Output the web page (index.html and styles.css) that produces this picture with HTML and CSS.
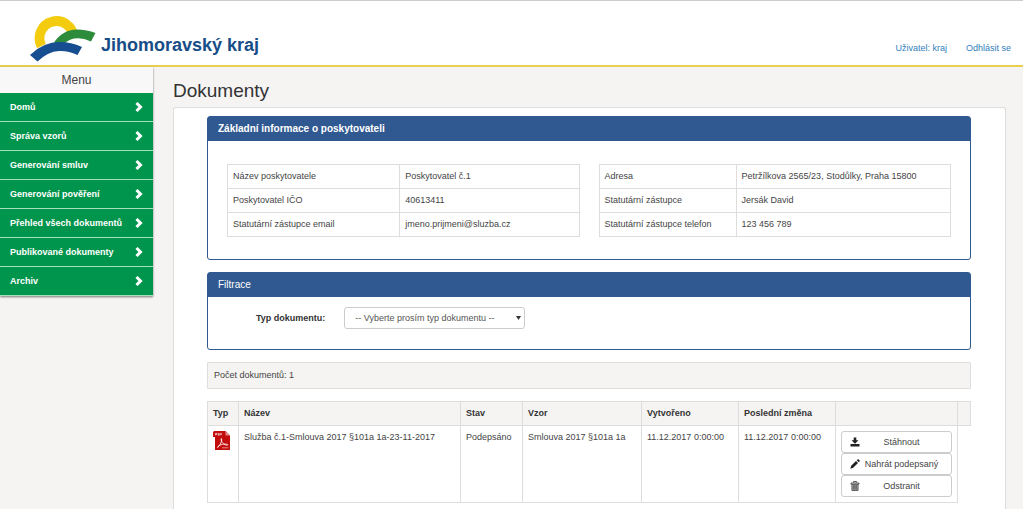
FILE: index.html
```html
<!DOCTYPE html>
<html lang="cs">
<head>
<meta charset="utf-8">
<title>Dokumenty</title>
<link rel="stylesheet" href="styles.css">
</head>
<body>
<svg class="sprite" aria-hidden="true">
  <symbol id="chevron" viewBox="0 0 8 10"><path d="M1.500 1 5.500 5 1.500 9" fill="none" stroke="#fff" stroke-width="3"/></symbol>
</svg>
<header class="header">
  <a class="brand" href="#">
    <svg class="brand-mark" viewBox="30 14 66 48" aria-hidden="true">
      <path d="M41.500 46A17 17 0 1 1 73.500 37" fill="none" stroke="#f3cb0f" stroke-width="9.800"/>
      <path d="M53 44Q62 29.500 77 29.500Q87 29.500 95.500 33L91 41.500Q82 37 74 38.500Q67 40 63 45Z" fill="#2c8c3c"/>
      <path d="M30 55Q43 42 60 42Q71 42 82 47L77.500 55Q68 50.500 59 51Q48 51.500 37.500 61.500Z" fill="#174d91"/>
    </svg>
    <span class="brand-name">Jihomoravský kraj</span>
  </a>
  <nav class="user-nav">
    <a href="#">Uživatel: kraj</a>
    <a href="#">Odhlásit se</a>
  </nav>
</header>
<div class="layout">
  <nav class="sidebar">
    <div class="sidebar-title">Menu</div>
    <a class="menu-item" href="#">Domů<svg class="chevron"><use href="#chevron"/></svg></a>
    <a class="menu-item" href="#">Správa vzorů<svg class="chevron"><use href="#chevron"/></svg></a>
    <a class="menu-item" href="#">Generování smluv<svg class="chevron"><use href="#chevron"/></svg></a>
    <a class="menu-item" href="#">Generování pověření<svg class="chevron"><use href="#chevron"/></svg></a>
    <a class="menu-item" href="#">Přehled všech dokumentů<svg class="chevron"><use href="#chevron"/></svg></a>
    <a class="menu-item" href="#">Publikované dokumenty<svg class="chevron"><use href="#chevron"/></svg></a>
    <a class="menu-item" href="#">Archiv<svg class="chevron"><use href="#chevron"/></svg></a>
  </nav>
  <main class="content">
    <h1 class="page-title">Dokumenty</h1>
    <div class="card">
      <section class="panel">
        <h2 class="panel-heading panel-heading-strong">Základní informace o poskytovateli</h2>
        <div class="info">
          <table class="info-table info-provider">
            <tr><td>Název poskytovatele</td><td>Poskytovatel č.1</td></tr>
            <tr><td>Poskytovatel IČO</td><td>40613411</td></tr>
            <tr><td>Statutární zástupce email</td><td>jmeno.prijmeni@sluzba.cz</td></tr>
          </table>
          <table class="info-table info-contact">
            <tr><td>Adresa</td><td>Petržílkova 2565/23, Stodůlky, Praha 15800</td></tr>
            <tr><td>Statutární zástupce</td><td>Jersák David</td></tr>
            <tr><td>Statutární zástupce telefon</td><td>123 456 789</td></tr>
          </table>
        </div>
      </section>
      <section class="panel">
        <h2 class="panel-heading">Filtrace</h2>
        <form class="filter">
          <label for="doc-type">Typ dokumentu:</label>
          <span class="select-box">
            <select id="doc-type"><option>-- Vyberte prosím typ dokumentu --</option></select>
            <svg class="caret" viewBox="0 0 5 4" aria-hidden="true"><path d="M0 0H5L2.500 4Z" fill="#333"/></svg>
          </span>
        </form>
      </section>
      <p class="count">Počet dokumentů: 1</p>
      <table class="docs">
        <colgroup><col class="c-type"><col class="c-name"><col class="c-state"><col class="c-template"><col class="c-date"><col class="c-date"><col class="c-actions"><col class="c-end"></colgroup>
        <thead>
          <tr><th>Typ</th><th>Název</th><th>Stav</th><th>Vzor</th><th>Vytvořeno</th><th>Poslední změna</th><th></th><th></th></tr>
        </thead>
        <tbody>
          <tr>
            <td class="type-cell">
              <svg class="pdf" viewBox="0 0 17 19" role="img" aria-label="PDF">
                <path d="M1.500 0H12.500L17 4.500V19H2V6H0V1.500Q0 0 1.500 0Z" fill="#c20d0d"/>
                <path d="M12.500 0V4.500H17Z" fill="#e88a8a"/>
                <path d="M2.500 4.300V2.400H4V3.500H2.500M5.300 4.300V2.400H6.300V4.300ZM7.700 4.300V2.400H9M7.700 3.400H8.700" fill="none" stroke="#fff" stroke-width=".6"/>
                <path d="M4.500 16.500C6.500 15.500 9 11 8.600 7.800C8.300 6.800 7.700 8 8.300 9.500C9.300 12.500 12 14.500 14.500 14.200C15.500 13.500 13.500 12.700 10.500 13.200C7.500 13.600 4.500 15 4.500 16.500Z" fill="none" stroke="#fff" stroke-width=".8"/>
                <path d="M9 16.800H15.500" stroke="#eaa" stroke-width=".8"/>
              </svg>
            </td>
            <td>Služba č.1-Smlouva 2017 §101a 1a-23-11-2017</td>
            <td>Podepsáno</td>
            <td>Smlouva 2017 §101a 1a</td>
            <td>11.12.2017 0:00:00</td>
            <td>11.12.2017 0:00:00</td>
            <td>
              <div class="actions">
                <button type="button"><svg viewBox="0 0 10 10" aria-hidden="true"><path d="M3.700 0.500H6.300V3.300H8.500L5 6.700 1.500 3.300H3.700ZM0.500 7H9.500V9.500H0.500Z" fill="#222"/></svg><span>Stáhnout</span></button>
                <button type="button"><svg viewBox="0 0 10 10" aria-hidden="true"><path d="M0.300 9.700 1.200 6.700 6 2 8 4 3.200 8.800ZM6.700 1.300 7.600 0.500Q8.200 0 8.800 0.600L9.500 1.300Q10 1.900 9.500 2.500L8.700 3.300Z" fill="#222"/></svg><span>Nahrát podepsaný</span></button>
                <button type="button"><svg viewBox="0 0 10 10" aria-hidden="true"><path d="M1.900 3V9.500H8.100V3Z" fill="#aaa"/><path d="M3.500 1.500V0.500H6.500V1.500M1 2H9V3.200H1Z" fill="none" stroke="#444" stroke-width=".9"/><path d="M1.900 3.500V9.500H8.100V3.500M3.700 4.200V8.500M5 4.200V8.500M6.300 4.200V8.500" fill="none" stroke="#444" stroke-width=".8"/></svg><span>Odstranit</span></button>
              </div>
            </td>
          </tr>
        </tbody>
      </table>
    </div>
  </main>
</div>
</body>
</html>
```

FILE: styles.css
```css
* { box-sizing: border-box; }

body {
  margin: 0;
  min-height: 100vh;
  display: flex;
  flex-direction: column;
  background: #f5f4f3;
  color: #444;
  font: 9px/13px "Liberation Sans", Arial, sans-serif;
}

a { text-decoration: none; }
.sprite { display: none; }

.header {
  display: flex;
  justify-content: space-between;
  height: 67px;
  padding: 0 12px 0 30px;
  background: #fff;
  border-top: 1px solid #ccc;
  border-bottom: 2px solid #e8d04e;
}

.brand { display: flex; gap: 5px; padding-top: 13px; color: #174d87; }
.brand-mark { width: 66px; height: 48px; }
.brand-name { padding-top: 20px; font-size: 18px; line-height: 22px; font-weight: bold; }

.user-nav { display: flex; gap: 19px; padding-top: 41px; }
.user-nav a { color: #3280bd; }

.layout { display: flex; flex: 1; }

.sidebar {
  flex: 0 0 153px;
  align-self: flex-start;
  background: #f9f8f8;
  box-shadow: 0 1px 2px #777;
}
.sidebar-title { font-size: 12px; line-height: 26px; text-align: center; }
.menu-item {
  display: flex;
  align-items: center;
  justify-content: space-between;
  height: 29px;
  padding: 0 10px;
  background: #00954c;
  border-bottom: 1px solid #a5e0bd;
  color: #fff;
  font-weight: bold;
}
.chevron { width: 8px; height: 10px; }

.content {
  flex: 1;
  min-width: 0;
  display: flex;
  flex-direction: column;
  padding: 11px 17px 0 20px;
}
.page-title { margin: 0 0 3px; font-size: 19px; line-height: 26px; font-weight: normal; color: #333; }

.card {
  flex: 1;
  padding: 8px 34px 0 33px;
  background: #fff;
  border: 1px solid #ddd;
  border-bottom: 0;
  border-radius: 3px 3px 0 0;
}

.panel {
  margin-bottom: 12px;
  border: 1px solid #2f5990;
  border-radius: 3px;
}
.panel-heading {
  margin: 0;
  padding: 0 10px;
  background: #2f5990;
  color: #fff;
  font-size: 10px;
  line-height: 24px;
  font-weight: normal;
}
.panel-heading-strong { font-weight: bold; }

table { border-collapse: collapse; table-layout: fixed; }
td, th { border: 1px solid #ddd; padding: 5px; text-align: left; vertical-align: top; }

.info { display: grid; grid-template-columns: 1fr 1fr; gap: 19px; padding: 23px 19px 22px; }
.info-table { width: 100%; }
.info-provider td:first-child { width: 49%; }
.info-contact td:first-child { width: 39%; }

.filter { display: flex; align-items: center; gap: 19px; padding: 10px 10px 20px 48px; }
.filter label { font-weight: bold; color: #333; }
.select-box { position: relative; }
.select-box select {
  display: block;
  width: 181px;
  height: 22px;
  padding: 0 10px;
  appearance: none;
  border: 1px solid #ccc;
  border-radius: 3px;
  background: #fff;
  color: #555;
  font: inherit;
}
.caret { position: absolute; right: 4px; top: 9px; width: 5px; height: 4px; }

.count {
  margin: 0 0 12px;
  padding: 6px;
  background: #f5f4f3;
  border: 1px solid #ddd;
  border-radius: 1px;
}

.docs { width: 100%; }
.docs th { color: #333; background: #f5f4f3; }
.c-type { width: 31px; }
.c-state { width: 62px; }
.c-template { width: 119px; }
.c-date { width: 97px; }
.c-actions { width: 122px; }
.c-end { width: 13px; }
.pdf { display: block; width: 17px; height: 19px; }

.actions button {
  display: flex;
  align-items: center;
  width: 100%;
  height: 22px;
  padding: 0 8px;
  background: #fff;
  border: 1px solid #ccc;
  border-radius: 3px;
  color: #444;
  font: inherit;
}
.actions svg { flex: none; width: 10px; height: 10px; }
.actions span { flex: 1; text-align: center; white-space: nowrap; }
```
